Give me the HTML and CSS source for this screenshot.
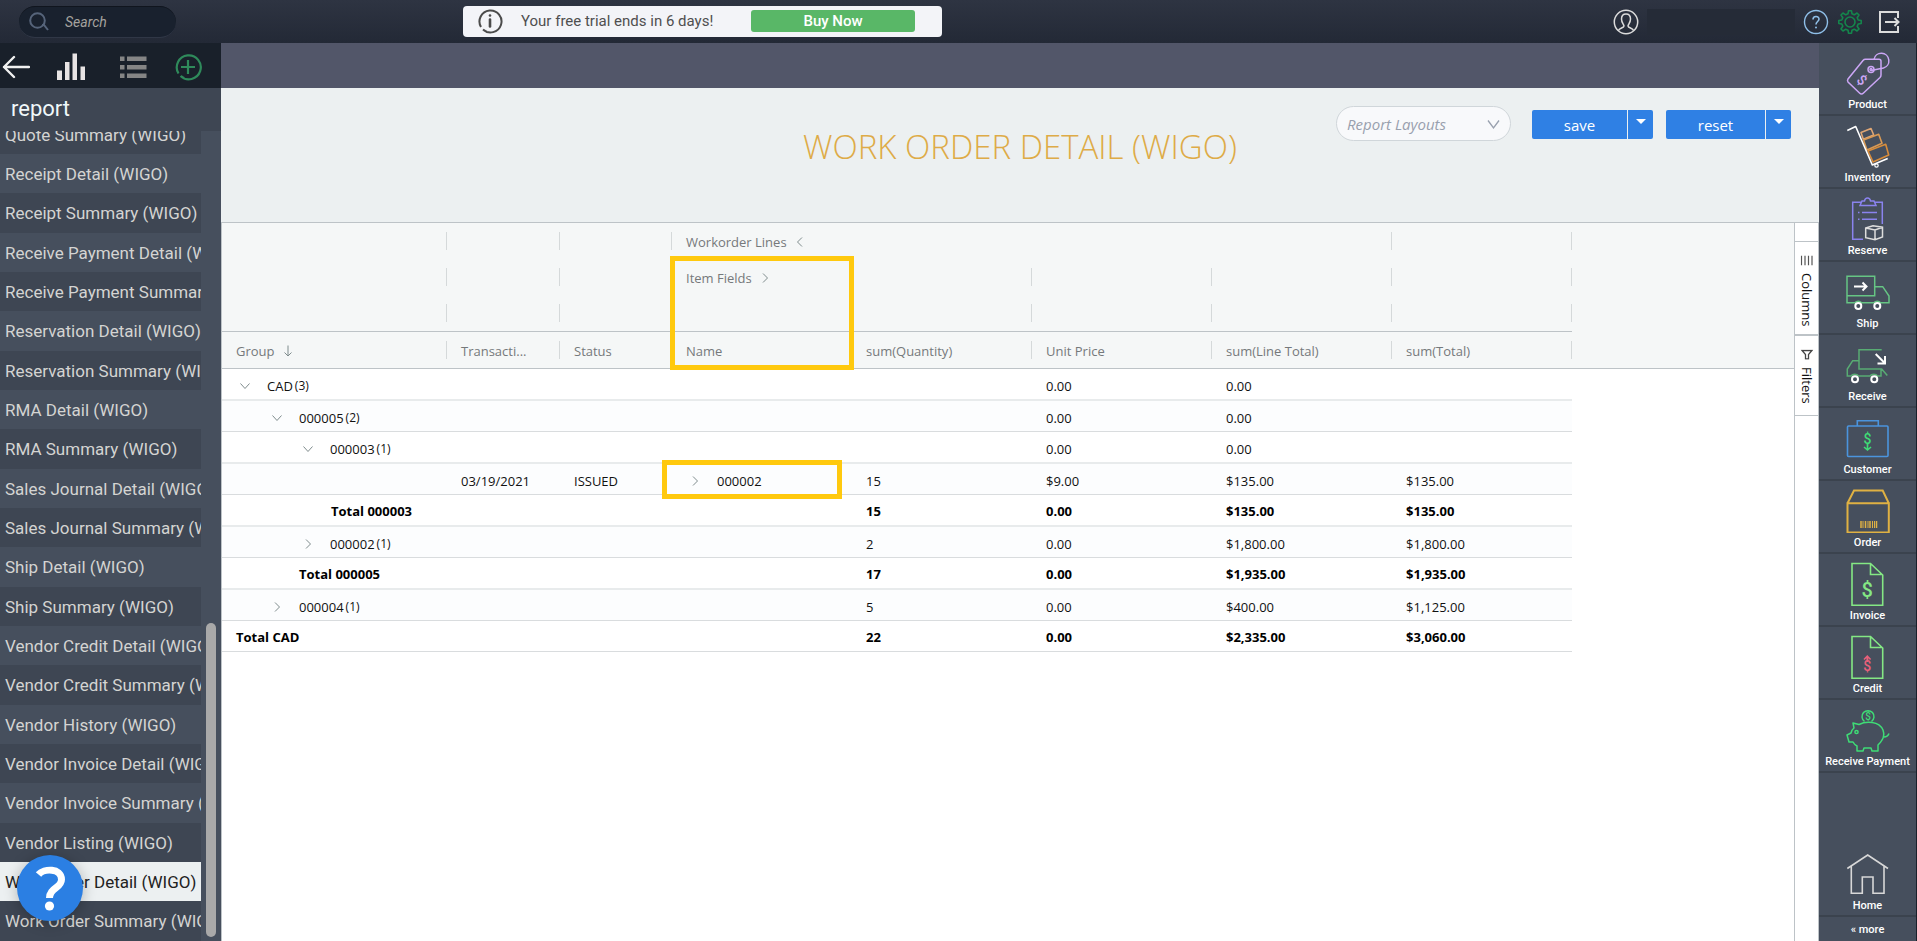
FILE: index.html
```html
<!DOCTYPE html>
<html lang="en">
<head>
<meta charset="utf-8">
<title>Work Order Detail (WIGO)</title>
<link rel="stylesheet" href="styles.css">
</head>
<body>
<svg class="defs" aria-hidden="true">
  <symbol id="down" viewBox="0 0 12 12"><path d="M1.500 3.500 6 8.500 10.500 3.500" fill="none" stroke="currentColor"/></symbol>
  <symbol id="right" viewBox="0 0 12 12"><path d="M4 1.500 8.500 6 4 10.500" fill="none" stroke="currentColor"/></symbol>
  <symbol id="left" viewBox="0 0 12 12"><path d="M8 1.500 3.500 6 8 10.500" fill="none" stroke="currentColor"/></symbol>
</svg>

<header class="topbar">
  <label class="search">
    <svg width="20" height="20" viewBox="0 0 20 20" fill="none" stroke="#56647a" stroke-width="2"><circle cx="8.500" cy="8.500" r="7.300"/><path d="M13 13h2l4 5"/></svg>
    <input type="text" placeholder="Search" aria-label="Search">
  </label>
  <div class="trial">
    <svg width="26" height="26" viewBox="0 0 26 26" fill="none" stroke="#4b4b4b" stroke-width="2"><path d="M4 19A11 11 0 1 1 6 21.500M7 22.300A11 11 0 0 0 10 23.600"/><path d="M13 11.500v7" stroke-width="2.600" stroke-linecap="round"/><circle cx="13" cy="7.500" r="1.300" fill="#4b4b4b" stroke="none"/></svg>
    <span class="trial-text">Your free trial ends in 6 days!</span>
    <button class="buy" type="button">Buy Now</button>
  </div>
  <div class="account">
    <button class="bare" type="button" aria-label="Profile"><svg width="26" height="26" viewBox="0 0 26 26" fill="none" stroke="#dcdcdc" stroke-width="1.500"><circle cx="13" cy="13" r="11.700"/><path d="M5.500 21.500C6 19 11 19 11 17c0-1.500-2.500-3-2.500-7C8.500 6.500 10.500 5 13 5s4.500 1.500 4.500 5c0 4-2.500 5.500-2.500 7 0 2 5 2 5.500 4.500"/></svg></button>
    <span class="account-name"></span>
    <button class="bare" type="button" aria-label="Help"><svg width="26" height="26" viewBox="0 0 26 26" fill="none" stroke="#8fbfe8" stroke-width="1.400"><circle cx="13" cy="13" r="11.500"/><path d="M10 10.500c0-4 6-4 6-.5 0 2.500-3 2.500-3 5.500" stroke-width="1.600"/><circle cx="13" cy="18.500" r="1" fill="#8fbfe8" stroke="none"/></svg></button>
    <button class="bare" type="button" aria-label="Settings"><svg width="26" height="26" viewBox="0 0 26 26" fill="none" stroke="#14864c" stroke-width="1.600" stroke-linejoin="round"><circle cx="13" cy="13" r="5"/><path d="M11 4.800 11.500 1.800h3l.5 3 2.300 1 2.700-1.800 2 2L20.200 8.700l1 2.300 3 .5v3l-3 .5-1 2.300 1.800 2.700-2 2-2.700-1.800-2.300 1-.5 3h-3l-.5-3-2.300-1L6 22l-2-2 1.800-2.700-1-2.300-3-.5v-3l3-.5 1-2.300L4 6l2-2 2.700 1.800z"/></svg></button>
    <button class="bare exit" type="button" aria-label="Log out"><svg width="24" height="24" viewBox="0 0 24 24" fill="none" stroke="#dcdcdc" stroke-width="2"><path d="M21 8V2H3v20h18v-6M8 12h13M17.500 8l4 4-4 4"/></svg></button>
  </div>
</header>

<div class="shell">
  <aside class="sidebar">
    <div class="tools">
      <button class="bare" type="button" aria-label="Back"><svg width="28" height="28" viewBox="0 0 28 28" fill="none" stroke="#f1f1f1" stroke-width="2.400" stroke-linecap="round" stroke-linejoin="round"><path d="M12 4 2 14l10 10M2 14h25"/></svg></button>
      <button class="bare charts" type="button" aria-label="Charts"><svg width="28" height="28" viewBox="0 0 28 28" fill="#e8e4e4"><rect y="17.500" width="5" height="9.500"/><rect x="8" y="9" width="4.500" height="18"/><rect x="15.500" y=".5" width="4.500" height="26.500"/><rect x="23.500" y="13.500" width="4.500" height="13.500"/></svg></button>
      <button class="bare" type="button" aria-label="List"><svg width="28" height="28" viewBox="0 0 28 28" fill="#858585"><rect x="1" y="3.500" width="4.500" height="4.500"/><rect x="8" y="3.500" width="19.500" height="4.500"/><rect x="1" y="12" width="4.500" height="4.500"/><rect x="8" y="12" width="19.500" height="4.500"/><rect x="1" y="20.500" width="4.500" height="4.500"/><rect x="8" y="20.500" width="19.500" height="4.500"/></svg></button>
      <button class="bare" type="button" aria-label="Add"><svg width="28" height="28" viewBox="0 0 28 28" fill="none" stroke="#2f8a5b" stroke-width="2.200"><path d="M4.500 20.500a12 12 0 1 1 2 2.500M7 23a12 12 0 0 0 3 2"/><path d="M14 7v14M7 14h14"/></svg></button>
    </div>
    <h2 class="side-title">report</h2>
    <div class="side-body">
      <nav class="reports">
        <a href="#">Quote Summary (WIGO)</a>
        <a href="#">Receipt Detail (WIGO)</a>
        <a href="#">Receipt Summary (WIGO)</a>
        <a href="#">Receive Payment Detail (WIGO)</a>
        <a href="#">Receive Payment Summary (WIGO)</a>
        <a href="#">Reservation Detail (WIGO)</a>
        <a href="#">Reservation Summary (WIGO)</a>
        <a href="#">RMA Detail (WIGO)</a>
        <a href="#">RMA Summary (WIGO)</a>
        <a href="#">Sales Journal Detail (WIGO)</a>
        <a href="#">Sales Journal Summary (WIGO)</a>
        <a href="#">Ship Detail (WIGO)</a>
        <a href="#">Ship Summary (WIGO)</a>
        <a href="#">Vendor Credit Detail (WIGO)</a>
        <a href="#">Vendor Credit Summary (WIGO)</a>
        <a href="#">Vendor History (WIGO)</a>
        <a href="#">Vendor Invoice Detail (WIGO)</a>
        <a href="#">Vendor Invoice Summary (WIGO)</a>
        <a href="#">Vendor Listing (WIGO)</a>
        <a href="#" class="current" aria-current="page">Work Order Detail (WIGO)</a>
        <a href="#">Work Order Summary (WIGO)</a>
      </nav>
      <div class="track"><div class="thumb"></div></div>
    </div>
    <button class="bubble" type="button" aria-label="Help"><svg width="66" height="66" viewBox="0 0 66 66" fill="none" stroke="#fff" stroke-width="7"><path d="M21.500 19.500c5-6 23-7 23 5 0 9-12 8-12 18.500"/><circle cx="32.500" cy="51" r="4.600" fill="#fff" stroke="none"/></svg></button>
  </aside>

  <main class="main">
    <div class="band"></div>
    <div class="head">
      <h1>WORK ORDER DETAIL (WIGO)</h1>
      <div class="controls">
        <div class="layouts">
          <select aria-label="Report Layouts"><option>Report Layouts</option></select>
          <svg width="13" height="13" viewBox="0 0 13 13" fill="none" stroke="#98a0ae" stroke-width="1.300"><path d="M1 2.500 6.500 10 12 2.500"/></svg>
        </div>
        <div class="split">
          <button type="button" class="act">save</button>
          <button type="button" class="drop" aria-label="Save options"><svg width="10" height="6" viewBox="0 0 10 6" fill="#fff"><path d="M0 0h10L5 5z"/></svg></button>
        </div>
        <div class="split">
          <button type="button" class="act wide">reset</button>
          <button type="button" class="drop" aria-label="Reset options"><svg width="10" height="6" viewBox="0 0 10 6" fill="#fff"><path d="M0 0h10L5 5z"/></svg></button>
        </div>
      </div>
    </div>
    <div class="grid">
      <div class="sheet">
        <table>
          <colgroup><col class="c-group"><col class="c-date"><col class="c-status"><col class="c-val"><col class="c-val"><col class="c-val"><col class="c-val"><col class="c-val"><col></colgroup>
          <thead>
            <tr><th></th><th></th><th></th><th colspan="4">Workorder Lines <svg class="ic"><use href="#left"/></svg></th><th></th><th class="rest"></th></tr>
            <tr><th></th><th></th><th></th><th>Item Fields <svg class="ic"><use href="#right"/></svg></th><th></th><th></th><th></th><th></th><th class="rest"></th></tr>
            <tr class="last-group"><th></th><th></th><th></th><th></th><th></th><th></th><th></th><th></th><th class="rest"></th></tr>
            <tr class="names"><th>Group <svg class="ic" viewBox="0 0 12 12" fill="none" stroke="currentColor"><path d="M6 .5v10.500M2.500 7.500 6 11l3.500-3.500"/></svg></th><th>Transacti...</th><th>Status</th><th>Name</th><th>sum(Quantity)</th><th>Unit Price</th><th>sum(Line Total)</th><th>sum(Total)</th><th class="rest"></th></tr>
          </thead>
          <tbody>
            <tr><td><span class="node l0"><svg class="ic"><use href="#down"/></svg>CAD <small>(3)</small></span></td><td></td><td></td><td></td><td></td><td>0.00</td><td>0.00</td><td></td><td class="rest"></td></tr>
            <tr><td><span class="node l1"><svg class="ic"><use href="#down"/></svg>000005 <small>(2)</small></span></td><td></td><td></td><td></td><td></td><td>0.00</td><td>0.00</td><td></td><td class="rest"></td></tr>
            <tr><td><span class="node l2"><svg class="ic"><use href="#down"/></svg>000003 <small>(1)</small></span></td><td></td><td></td><td></td><td></td><td>0.00</td><td>0.00</td><td></td><td class="rest"></td></tr>
            <tr><td></td><td>03/19/2021</td><td>ISSUED</td><td><span class="node l0"><svg class="ic"><use href="#right"/></svg>000002</span></td><td>15</td><td>$9.00</td><td>$135.00</td><td>$135.00</td><td class="rest"></td></tr>
            <tr class="total"><td><span class="t3">Total 000003</span></td><td></td><td></td><td></td><td>15</td><td>0.00</td><td>$135.00</td><td>$135.00</td><td class="rest"></td></tr>
            <tr><td><span class="node l2"><svg class="ic"><use href="#right"/></svg>000002 <small>(1)</small></span></td><td></td><td></td><td></td><td>2</td><td>0.00</td><td>$1,800.00</td><td>$1,800.00</td><td class="rest"></td></tr>
            <tr class="total"><td><span class="t2">Total 000005</span></td><td></td><td></td><td></td><td>17</td><td>0.00</td><td>$1,935.00</td><td>$1,935.00</td><td class="rest"></td></tr>
            <tr><td><span class="node l1"><svg class="ic"><use href="#right"/></svg>000004 <small>(1)</small></span></td><td></td><td></td><td></td><td>5</td><td>0.00</td><td>$400.00</td><td>$1,125.00</td><td class="rest"></td></tr>
            <tr class="total"><td>Total CAD</td><td></td><td></td><td></td><td>22</td><td>0.00</td><td>$2,335.00</td><td>$3,060.00</td><td class="rest"></td></tr>
          </tbody>
        </table>
        <div class="mark mark-name"></div>
        <div class="mark mark-item"></div>
      </div>
      <div class="tabs">
        <button type="button" class="tab"><svg width="10" height="13" viewBox="0 0 10 13" stroke="#555" stroke-width="1.200"><path d="M0 1.500h10M0 5h10M0 8.500h10M0 12h10"/></svg>Columns</button>
        <button type="button" class="tab"><svg width="10" height="13" viewBox="0 0 10 13" fill="none" stroke="#444" stroke-width="1.300"><path d="M1 1.500v10l4-3.500h4.500V5H5z"/></svg>Filters</button>
      </div>
    </div>
  </main>

  <nav class="rail">
    <a href="#"><svg width="44" height="44" viewBox="0 0 44 44" fill="none" stroke="#cba6f5" stroke-width="1.500"><path d="M19.500 8.300H33q2 0 2 2V24q0 1.500-1 2.500L17.500 42q-2 2-4 0L2 31q-1-1.500 0-3L17 9.500q1-1.200 2.500-1.200z"/><path d="M28 8.300A7.500 7.500 0 1 1 37.500 17L25 19.500"/><circle cx="25" cy="18.500" r="3"/><circle cx="25" cy="18.500" r="1"/><text x="0" y="5" transform="translate(16 29) rotate(42)" class="cash s14" fill="#cba6f5">$</text></svg>Product</a>
    <a href="#"><svg width="44" height="44" viewBox="0 0 44 44" fill="none" stroke="#d98d3b" stroke-width="1.600" stroke-linejoin="round"><path d="M15 8.500 25 4.500l2.700 6.500-10.400 4.200z" stroke="#dfa674"/><path d="M17.500 16l15.200-5.700 3.300 9L21 26z" stroke="#d99a55"/><path d="M22 27l17.700-6.700L42.700 31 27 38z"/><path d="M1.300 6.500 9.700 2.500 26.300 41l15.400-6.500" stroke="#fff"/><circle cx="30.500" cy="41.500" r="1.700" stroke="#fff" stroke-width="1.200"/></svg>Inventory</a>
    <a href="#"><svg width="44" height="44" viewBox="0 0 44 44" fill="none" stroke="#8a83ee" stroke-width="1.500"><path d="M17 42.300H6.700V5.300H15M29 5.300h7.300V27"/><path d="M14 8.500 16 4h2.500q.5-3 3-3t3 3H28l2 4.500zM12 15.500h1.500M16 15.500h15M12 22.300h1.500M16 22.300h15"/><path d="M19.700 31 27 28.700l9.500 1.500V40L29 42.700l-9.300-2zM19.700 31l9.300 2 7.500-2.800M29 33v9.700" stroke="#ddd"/></svg>Reserve</a>
    <a href="#"><svg width="44" height="44" viewBox="0 0 44 44" fill="none" stroke="#66c584" stroke-width="1.500"><path d="M8 32.700H1V6.300h27.700v19.400H1M16.500 32.700H27M36 32.700h7V26l-6.300-9.300h-8M7 32.700h2c1.500-2 5-2 6.500 0h2M27 32.700h1c1.500-2 5-2 6.500 0H37"/><g stroke="#fff" stroke-width="2"><circle cx="12.300" cy="36" r="3"/><circle cx="31.300" cy="36" r="3"/><path d="M8 16.500h12M16.500 12.500l4 4-4 4"/></g></svg>Ship</a>
    <a href="#"><svg width="44" height="44" viewBox="0 0 44 44" fill="none" stroke="#58ac73" stroke-width="1.500"><path d="M35.700 6.700H13V26h22.700l5.600 6.500M13 17.700H6.700L1.300 26v7H5c1.500-2.500 6-2.500 7.500 0H24c1.500-2.500 6-2.500 7.500 0H35v-7"/><g stroke="#fff" stroke-width="2"><circle cx="9" cy="36.300" r="3"/><circle cx="28.300" cy="36.300" r="3"/><path d="M29.700 11l9 9M39 13v7.500h-7.500"/></g></svg>Receive</a>
    <a href="#"><svg width="44" height="44" viewBox="0 0 44 44" fill="none" stroke="#4b94dd" stroke-width="1.600"><rect x="1.500" y="10" width="40.500" height="30.500" rx="1"/><path d="M11.300 10V4.700h21V10"/><text x="21.500" y="28" class="cash s14" fill="#3fdc76">$</text><path d="M21.500 28v6M18 31l3.500 3 3.500-3" stroke="#3fdc76"/></svg>Customer</a>
    <a href="#"><svg width="44" height="44" viewBox="0 0 44 44" fill="none" stroke="#dfb143" stroke-width="2"><path d="M1.500 14.300h41.300v29.200H1.500zV14.300L8 1.500h28.700l6.100 12.800"/><path d="M15 32v7M19.500 32v7M24 32v7M30.500 32v7" stroke-width="1.500"/><path d="M17 32v7M22 32v7M26.500 32v7M28.500 32v7" stroke-width="1"/></svg>Order</a>
    <a href="#"><svg width="44" height="44" viewBox="0 0 44 44" fill="none" stroke="#84e884" stroke-width="1.600"><path d="M6 1.500h18.500L36.700 13v30.200H6zM24.500 1.500V12.500h12"/><text x="21.300" y="35" class="cash s20" fill="#84e884">$</text></svg>Invoice</a>
    <a href="#"><svg width="44" height="44" viewBox="0 0 44 44" fill="none" stroke="#84e884" stroke-width="1.600"><path d="M6 1.500h18.500L36.700 13v30.200H6zM24.500 1.500V12.500h12"/><text x="21.300" y="36" class="cash s14" fill="#e8607a">$</text><path d="M21.300 27v-5.500M18 24.500l3.300-3.300 3.300 3.300" stroke="#e8607a"/></svg>Credit</a>
    <a href="#"><svg width="44" height="44" viewBox="0 0 44 44" fill="none" stroke="#3fdc76" stroke-width="1.500" stroke-linejoin="round"><path d="M18.500 13.500a6 6 0 1 1 7 0"/><text x="22" y="12" class="cash s10" fill="#3fdc76">$</text><path d="M7 15l6 1.500C20 13 33 13 37 22c1 3 1 7-1 10-1 2-3 4-4 5v6h-6l-1-3h-7l-1 3H11v-5c-2-1-3-2-4-4H3l-2-7 4-2c.5-2 1-3.500 3-5zM38 29c2 0 4-1 5-3.500"/><circle cx="10.500" cy="24" r="1.600"/></svg>Receive Payment</a>
    <div class="gap"></div>
    <a href="#"><svg width="44" height="44" viewBox="0 0 44 44" fill="none" stroke="#d8d8d8" stroke-width="1.600"><path d="M1.300 16.500 21.700 3 42 16.500M5.300 14v27.300h11V25H27v16.300h11V14"/></svg>Home</a>
    <button class="more" type="button">« more</button>
  </nav>
</div>
</body>
</html>
```

FILE: styles.css
```css
* { box-sizing: border-box; }
body {
  margin: 0;
  height: 100vh;
  display: flex;
  flex-direction: column;
  overflow: hidden;
  font-family: Roboto, "Liberation Sans", sans-serif;
  background: #fff;
}
button, input, select { font: inherit; }
a { text-decoration: none; color: inherit; }
svg { display: block; flex: none; }
.defs { position: absolute; width: 0; height: 0; }
.bare { background: none; border: 0; padding: 0; cursor: pointer; }

/* top bar */
.topbar {
  flex: none;
  height: 43px;
  display: flex;
  align-items: center;
  padding: 0 16px 0 19px;
  background: linear-gradient(#2e3442, #232936);
}
.search {
  width: 157px;
  height: 32px;
  display: flex;
  align-items: center;
  gap: 16px;
  padding: 0 10px;
  border-radius: 16px;
  background: #19212e;
  border-top: 1px solid #10151e;
  border-bottom: 1px solid #303746;
}
.search input {
  flex: 1;
  min-width: 0;
  border: 0;
  padding: 0;
  background: none;
  color: #fff;
  font-size: 14px;
  font-style: italic;
  outline: 0;
}
.search input::placeholder { color: #a5a39f; opacity: 1; }
.trial {
  width: 479px;
  height: 31px;
  margin: 0 auto 0 15.25%;
  padding: 0 27px 2px 14px;
  display: flex;
  align-items: center;
  border-radius: 4px;
  background: #f3f4f8;
}
.trial-text { margin-left: 18px; color: #4f4f4f; font-size: 15px; }
.buy {
  margin-left: auto;
  width: 164px;
  height: 22px;
  padding: 0;
  border: 0;
  border-radius: 3px;
  background: #59b767;
  color: #fff;
  font-size: 15px;
  font-weight: 500;
}
.account { display: flex; align-items: center; gap: 8px; }
.account-name { width: 148px; height: 26px; background: #252b37; }
.exit { margin-left: 6px; }

.shell { flex: 1; min-height: 0; display: flex; }

/* report list */
.sidebar {
  position: relative;
  flex: none;
  width: 221px;
  display: flex;
  flex-direction: column;
  background: #464f5d;
}
.tools {
  flex: none;
  height: 45px;
  display: flex;
  align-items: center;
  justify-content: space-between;
  padding: 2px 19px 0 2px;
  background: #19202a;
}
.charts { margin-right: 6px; }
.side-title {
  flex: none;
  margin: 0;
  height: 43px;
  padding: 0 11px;
  font-size: 22px;
  line-height: 41px;
  font-weight: 400;
  color: #f0f8fa;
  background: #3e4653;
}
.side-body { flex: 1; min-height: 0; display: flex; }
.reports {
  width: 201px;
  display: flex;
  flex-direction: column;
  justify-content: flex-end;
  overflow: hidden;
}
.reports a {
  flex: none;
  height: 39px;
  line-height: 41px;
  padding-left: 5px;
  overflow: hidden;
  white-space: nowrap;
  font-size: 17px;
  color: #d4d4d2;
}
.reports a:nth-child(3n) { height: 40px; }
.reports a:nth-child(odd) { background: #3e4653; }
.reports a.current { background: #ecf0f1; color: #222; }
.track {
  flex: 1;
  display: flex;
  flex-direction: column;
  justify-content: flex-end;
  padding: 0 5px 4px;
}
.thumb { height: 39%; border-radius: 5px; background: #a9a9a9; }
.bubble {
  position: absolute;
  left: 17px;
  bottom: 20px;
  padding: 0;
  border: 0;
  border-radius: 50%;
  background: #2b7fe3;
  box-shadow: 0 2px 14px rgba(0, 0, 0, .25);
}

/* report page */
.main { flex: 1; min-width: 0; display: flex; flex-direction: column; }
.band { flex: none; height: 45px; background: #525669; }
.head {
  flex: none;
  height: 134px;
  display: grid;
  grid-template-columns: 1fr auto 1fr;
  align-items: start;
  padding: 18px 28px 0;
  background: #ecf0f1;
}
h1 {
  grid-column: 2;
  margin: 18px 0 0;
  font: 300 33px/46px "Open Sans", "Noto Sans", sans-serif;
  color: #deab47;
}
.controls {
  justify-self: end;
  display: flex;
  align-items: center;
  font-family: "Open Sans", "Noto Sans", sans-serif;
}
.layouts { position: relative; width: 175px; margin-right: 21px; }
.layouts select {
  appearance: none;
  width: 100%;
  height: 35px;
  padding: 0 10px;
  border: 1px solid #d0d6da;
  border-radius: 18px;
  background: #f8f9fb;
  color: #98a0ae;
  font-size: 15px;
  font-style: italic;
}
.layouts svg { position: absolute; right: 11px; top: 12px; pointer-events: none; }
.split { display: flex; gap: 1px; padding-top: 1px; }
.split + .split { margin-left: 13px; }
.split button { height: 29px; border: 0; padding: 0; background: #2f80e4; color: #fff; font-size: 15px; }
.split .act { width: 95px; border-radius: 2px 0 0 2px; padding-top: 2px; }
.split .wide { width: 99px; }
.split .drop { width: 25px; border-radius: 0 2px 2px 0; padding-bottom: 4px; }
.drop svg { margin: 0 auto; }

/* data grid */
.grid {
  flex: 1;
  min-height: 0;
  display: flex;
  border: 1px solid #bdc3c7;
  border-bottom: 0;
  font: 13px "Open Sans", "Noto Sans", sans-serif;
}
.sheet { position: relative; flex: 1; min-width: 0; overflow: hidden; }
table { width: 100%; table-layout: fixed; border-collapse: separate; border-spacing: 0; }
.c-group { width: 225px; }
.c-date { width: 113px; }
.c-status { width: 112px; }
.c-val { width: 180px; }
th, td { padding: 0 14px; text-align: left; white-space: nowrap; overflow: hidden; }
th {
  height: 36px;
  padding-top: 2px;
  font-weight: 400;
  color: #75797b;
  background: linear-gradient(#d5d9da, #d5d9da) no-repeat right center / 1px 18px #f5f7f7;
}
th .ic { display: inline-block; vertical-align: -1px; margin-left: 4px; }
.last-group th { height: 37px; border-bottom: 1px solid #bdc3c7; }
.names th { height: 37px; border-bottom: 1px solid #bdc3c7; }
th.rest { background: #f5f7f7; }
.last-group th.rest { border-bottom: 0; }
.ic { width: 12px; height: 12px; color: #7f8c8d; }
td { height: 31px; padding-top: 3px; border-bottom: 1px solid #d9dcde; color: #111; }
tbody tr:nth-child(odd) td { height: 32px; border-bottom: 2px solid #e8ebec; }
tbody tr:nth-child(even) td { background: #fcfdfe; }
tbody tr:last-child td { height: 31px; border-bottom: 1px solid #d9dcde; }
tbody tr td.rest { border: 0; background: #fff; }
tbody .total td { padding-top: 1px; font-weight: 700; color: #000; }
.node { display: flex; align-items: center; }
.node .ic { margin: 0 16px 0 3px; }
.node small { font-size: 12px; margin-left: 2px; }
.l1 { padding-left: 32px; }
.l2 { padding-left: 63px; }
.t2 { padding-left: 63px; }
.t3 { padding-left: 95px; }
.mark { position: absolute; border: 5px solid #ffc90e; pointer-events: none; }
.mark-name { left: 448px; top: 33px; width: 184px; height: 114px; }
.mark-item { left: 440px; top: 237px; width: 180px; height: 39px; }

.tabs {
  flex: none;
  width: 24px;
  padding-top: 18px;
  border-left: 1px solid #bdc3c7;
}
.tab {
  width: 100%;
  display: flex;
  align-items: center;
  gap: 6px;
  writing-mode: vertical-rl;
  padding: 12px 0 8px;
  border: 0;
  border-top: 1px solid #bdc3c7;
  border-bottom: 1px solid #bdc3c7;
  background: #fff;
  color: #111;
  font-size: 13px;
}
.tab:last-child { padding-bottom: 11px; }
.tab svg { transform: rotate(90deg); }

/* module rail */
.rail {
  flex: none;
  width: 98px;
  display: flex;
  flex-direction: column;
  border-right: 1px solid #19202a;
  background: #464f5d;
  color: #fff;
  font-size: 11px;
  font-weight: 500;
}
.rail a {
  flex: none;
  display: flex;
  flex-direction: column;
  align-items: center;
  padding-top: 8px;
  line-height: 19px;
  border-bottom: 2px solid #3b434e;
}
.gap { flex: 1; }
.more {
  height: 24px;
  padding: 0;
  border: 0;
  background: none;
  color: #fff;
}
.cash { font-family: Roboto, sans-serif; text-anchor: middle; stroke: none; }
.s10 { font-size: 10px; }
.s14 { font-size: 14px; }
.s20 { font-size: 20px; }
```
